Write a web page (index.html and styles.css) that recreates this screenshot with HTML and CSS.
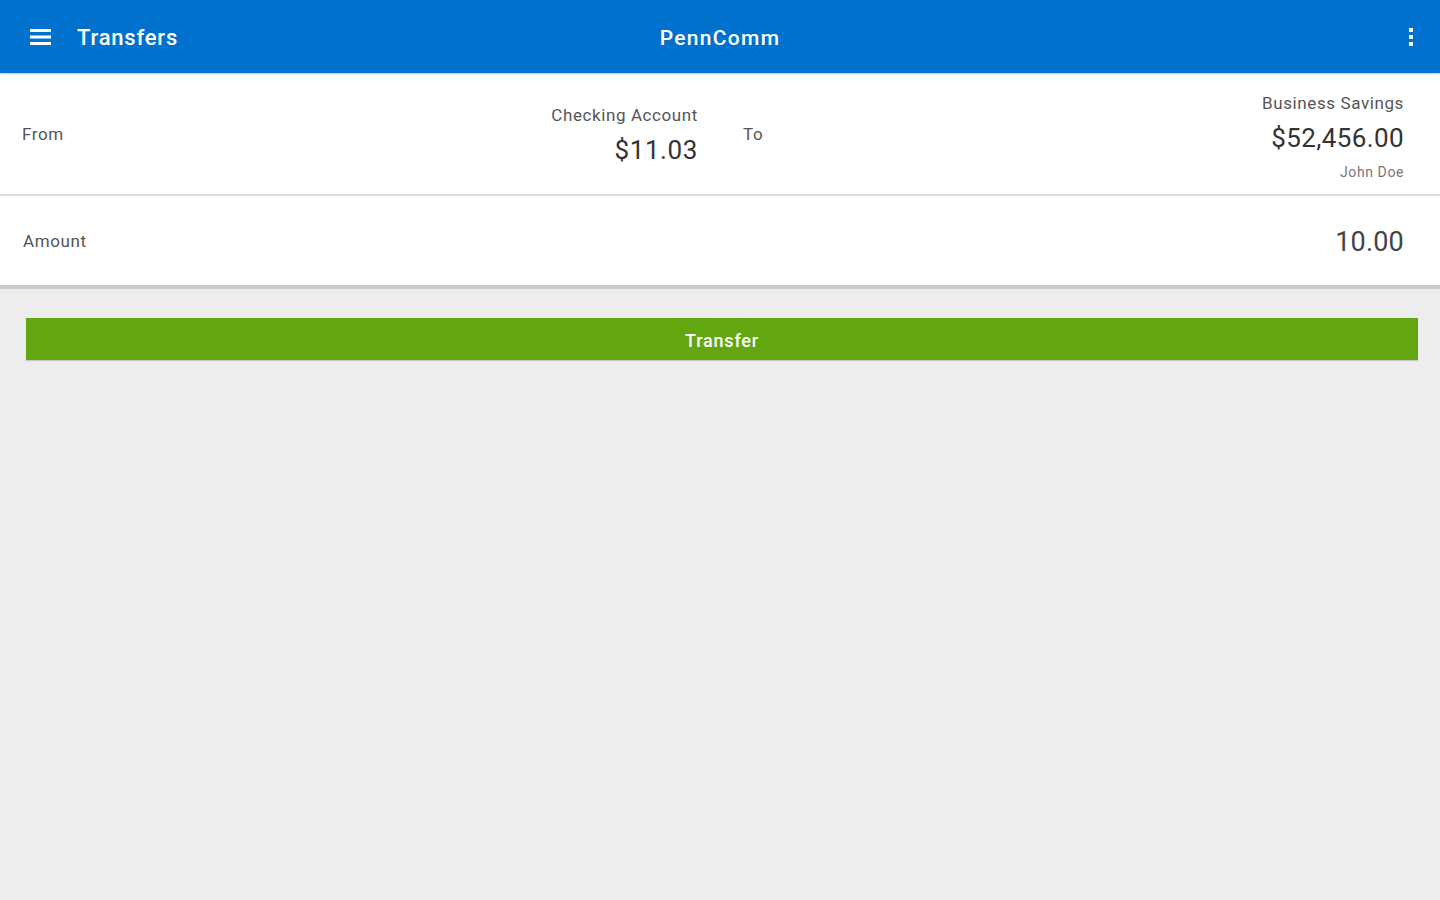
FILE: index.html
```html
<!DOCTYPE html>
<html>
<head>
<meta charset="utf-8">
<link rel="stylesheet" href="styles.css">
</head>
<body>
<header class="appbar">
  <div class="appbar-left">
    <svg class="menu-icon" width="22" height="18" viewBox="0 0 22 18"><rect x="0" y="1" width="21" height="3" fill="#fff"/><rect x="0" y="7.5" width="21" height="3" fill="#fff"/><rect x="0" y="14" width="21" height="3" fill="#fff"/></svg>
    <span class="appbar-title">Transfers</span>
  </div>
  <div class="appbar-center">PennComm</div>
  <div class="appbar-right">
    <svg width="6" height="20" viewBox="0 0 6 20"><rect x="1" y="1" width="4" height="4" fill="#fff"/><rect x="1" y="8" width="4" height="4" fill="#fff"/><rect x="1" y="15" width="4" height="4" fill="#fff"/></svg>
  </div>
</header>
<main>
  <section class="card accounts">
    <div class="half from">
      <span class="label">From</span>
      <div class="acct">
        <div class="acct-name">Checking Account</div>
        <div class="acct-bal">$11.03</div>
      </div>
    </div>
    <div class="half to">
      <span class="label">To</span>
      <div class="acct">
        <div class="acct-name">Business Savings</div>
        <div class="acct-bal big">$52,456.00</div>
        <div class="acct-owner">John Doe</div>
      </div>
    </div>
  </section>
  <section class="card amount">
    <span class="label">Amount</span>
    <span class="amount-val">10.00</span>
  </section>
  <div class="actions">
    <button class="transfer-btn">Transfer</button>
  </div>
</main>
</body>
</html>
```

FILE: styles.css
```css
* { box-sizing: border-box; }
html, body { margin: 0; padding: 0; }
body {
  width: 1440px;
  height: 900px;
  background: #ededed;
  font-family: Roboto, "Liberation Sans", sans-serif;
  color: #444;
  overflow: hidden;
}
.appbar {
  height: 73px;
  background: #0072ce;
  display: flex;
  align-items: center;
  justify-content: space-between;
  padding: 0 26px 0 30px;
  box-shadow: 0 1px 2px rgba(0,0,0,0.25);
  position: relative;
  color: #fff;
}
.appbar-left { display: flex; align-items: center; gap: 25px; width: 300px; }
.menu-icon { display: block; margin-top: 1px; }
.appbar-title { font-size: 22px; font-weight: 500; letter-spacing: 0.8px; margin-top: 2px; }
.appbar-center { font-size: 21px; font-weight: 500; letter-spacing: 1.3px; margin-left: -4px; margin-top: 2px; }
.appbar-right { width: 300px; display: flex; justify-content: flex-end; }
.appbar-right svg { display: block; }

.card { background: #fff; }
.accounts {
  height: 123px;
  display: flex;
  border-bottom: 2px solid #dcdcdc;
}
.half { width: 720px; display: flex; align-items: center; justify-content: space-between; }
.from { padding: 0 22px 0 22px; }
.to { padding: 0 36px 0 23px; }
.label { font-size: 17px; letter-spacing: 0.6px; color: #555; }
.acct { text-align: right; }
.acct-name { font-size: 17px; letter-spacing: 0.6px; color: #555; line-height: 20px; }
.acct-bal { font-size: 26px; letter-spacing: 0.6px; color: #333; line-height: 32px; margin-top: 9px; }
.acct-bal.big { font-size: 26px; letter-spacing: 0.4px; }
.acct-owner { font-size: 14px; letter-spacing: 0.6px; color: #777; line-height: 20px; margin-top: 8px; }
.from .acct { margin-top: 3px; }
.to .acct { margin-top: 7px; }

.amount {
  height: 93px;
  display: flex;
  align-items: center;
  justify-content: space-between;
  padding: 0 36px 0 23px;
  border-bottom: 4px solid #c8c8c8;
}
.amount-val { font-size: 27px; color: #444; margin-top: 3px; letter-spacing: 0.2px; }

.actions { padding: 29px 22px 0 26px; }
.transfer-btn {
  display: block;
  width: 100%;
  height: 42px;
  border: none;
  background: #62a70f;
  color: #fff;
  font-family: Roboto, "Liberation Sans", sans-serif;
  font-size: 18px;
  font-weight: 500;
  letter-spacing: 0.8px;
  padding: 3px 0 0 0;
  box-shadow: 0 1px 1px rgba(0,0,0,0.15);
}
```
